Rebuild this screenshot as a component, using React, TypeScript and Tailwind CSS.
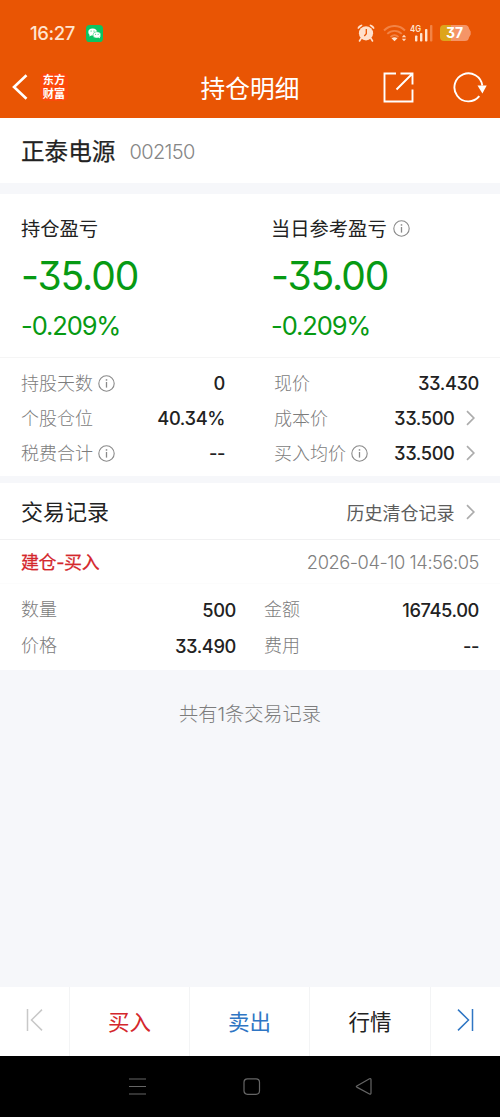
import type { ReactNode } from "react";

function InfoIcon() {
  return (
    <svg width="17" height="17" viewBox="0 0 17 17" fill="none" stroke="#8a8a8a" className="-mt-px block shrink-0">
      <circle cx="8.5" cy="8.5" r="7.7" strokeWidth="1.1" />
      <path d="M8.5 7v5.6" strokeWidth="1.3" />
      <path d="M8.5 4.2v1.5" strokeWidth="1.5" />
    </svg>
  );
}

function Chevron() {
  return (
    <svg width="9" height="16" viewBox="0 0 9 16" fill="none" stroke="#acacac" strokeWidth="1.7" className="-mt-px ml-[11.5px] mr-[4px] shrink-0">
      <path d="M1 1.2 7.8 8 1 14.8" />
    </svg>
  );
}

function StatusBar() {
  return (
    <div className="flex h-[66px] items-center pl-[30px] pr-[29px] text-[#ffe4cf]">
      <span className="w-[56px] pb-px text-[18.5px] font-medium leading-[20px] tracking-[-0.4px]">16:27</span>
      <svg width="17" height="17" viewBox="0 0 17 17">
        <rect width="17" height="17" rx="3.6" fill="#0bc462" />
        <ellipse cx="6.6" cy="7" rx="4.3" ry="3.6" fill="#fff" />
        <path d="m3.8 9.2-.5 2.3 2.4-1.3Z" fill="#fff" />
        <ellipse cx="10.9" cy="9.9" rx="3.9" ry="3.2" fill="#fff" stroke="#0bc462" strokeWidth=".5" />
        <path d="m12.6 12.2 1.2 1.4.1-2.2Z" fill="#fff" />
        <g fill="#0bc462">
          <circle cx="5.1" cy="6" r=".6" />
          <circle cx="8" cy="6" r=".6" />
          <circle cx="9.6" cy="9.2" r=".5" />
          <circle cx="12.1" cy="9.2" r=".5" />
        </g>
      </svg>
      <svg width="18" height="18" viewBox="0 0 18 18" className="-mt-px ml-auto mr-[2px]" fill="#ffe0cc">
        <circle cx="9" cy="9.3" r="7.1" />
        <path d="M.4 4.2C1.2 2 2.6.8 5 .4l.5 1L1.4 5Z M17.6 4.2C16.8 2 15.4.8 13 .4l-.5 1L16.6 5Z" />
        <path d="m4 14.5-1.5 2.5 M14 14.5l1.5 2.5" stroke="#ffe0cc" strokeWidth="1.6" strokeLinecap="round" />
        <path d="M9.3 5v4.7L7.3 12" fill="none" stroke="#e95504" strokeWidth="1.3" />
      </svg>
      <svg width="24" height="17" viewBox="0 0 24 17" className="ml-[6px]" fill="none">
        <path d="M1 5.5C7-.6 16-.6 22 5.5" stroke="#f28345" strokeWidth="1.9" />
        <path d="M4.3 8.9c4.2-4 10.2-4 14.4 0" stroke="#f28345" strokeWidth="1.9" />
        <path d="M7.5 12c2.5-2.3 5.5-2.3 8 0" stroke="#f28345" strokeWidth="1.7" />
        <path d="M8.5 13.3c2-1.5 4-1.5 6 0L11.5 16.2Z" fill="#ffe4cf" />
        <path d="m18.8 12.3 2.2-2.6 2.2 2.6Z M18.8 13.7l2.2 2.6 2.2-2.6Z" fill="#ffd9be" />
      </svg>
      <svg width="24" height="18" viewBox="0 0 24 18" className="ml-[3px]">
        <text x="0" y="7.6" fontSize="9.5" fontWeight="600" fill="#ffe4cf" textLength="11" lengthAdjust="spacingAndGlyphs">4G</text>
        <g fill="#ffe4cf">
          <rect x="5" y="11.5" width="2.4" height="6" rx=".8" />
          <rect x="10" y="9" width="2.4" height="8.5" rx=".8" />
          <rect x="15" y="5" width="2.4" height="12.5" rx=".8" />
          <rect x="20" y="1" width="2.4" height="16.5" rx=".8" fill="#f28345" />
        </g>
      </svg>
      <svg width="31" height="16" viewBox="0 0 31 16" className="ml-[6px]">
        <path d="M4 0H11V16H4Q0 16 0 12V4Q0 0 4 0Z" fill="#dda51c" />
        <path d="M11 0H25Q28.5 0 29 3.5L30.7 6.5V9.5L29 12.5Q28.5 16 25 16H11Z" fill="#f59567" />
        <text x="14.5" y="13.2" textAnchor="middle" fontSize="14" fontWeight="700" fill="#fff">37</text>
      </svg>
    </div>
  );
}

function NavBar() {
  return (
    <div className="grid h-[52px] grid-cols-3 items-start text-white">
      <div className="flex h-[42px] items-center pl-[12px]">
        <svg width="16" height="26" viewBox="0 0 16 26" fill="none" stroke="#fff" strokeWidth="2.6">
          <path d="M14.5 1.2 2 13l12.5 11.8" />
        </svg>
        <div className="ml-[12px] flex h-[28px] w-[28px] flex-col items-center justify-center rounded-[5px] bg-[#fb4a0b] pb-px font-['Noto_Sans_CJK_SC',sans-serif] text-[11.2px] font-bold leading-[13.5px]">
          <span>东方</span>
          <span>财富</span>
        </div>
      </div>
      <h1 className="pt-px text-center text-[24.7px] leading-[44px]">持仓明细</h1>
      <div className="flex h-[42px] items-center justify-end pr-[13px]">
        <svg width="31" height="31" viewBox="0 0 31 31" fill="none" stroke="#fff" strokeWidth="1.9">
          <path d="M13 1.5H1.5V29.5H29.5V17.5" />
          <path d="M17.5 1.5H29.5V12.5 M29 2 13.5 17.5" />
        </svg>
        <svg width="34" height="31" viewBox="0 0 34 31" fill="none" className="ml-[39px]">
          <path d="M26.3 24.2A14 14 0 1 1 29.3 13.5" stroke="#fff" strokeWidth="1.9" />
          <path d="M24.5 13.5h9.2l-4.3 8Z" fill="#fff" />
        </svg>
      </div>
    </div>
  );
}

function ProfitBlock({ label, info }: { label: string; info?: boolean }) {
  return (
    <div className="w-[250px] shrink-0 text-[#079a13]">
      <div className="flex h-[24px] items-center gap-[6px]">
        <span className="text-[19.3px] leading-[24px] text-[#222]">{label}</span>
        {info && <InfoIcon />}
      </div>
      <div className="mt-[10px] text-[39px] leading-[50px] tracking-[-1.1px]">-35.00</div>
      <div className="mt-[9px] text-[25.5px] leading-[32px] tracking-[-1.1px]">-0.209%</div>
    </div>
  );
}

type RowProps = { label: string; value: string; info?: boolean; link?: boolean; className?: string };

function Row({ label, value, info, link, className = "h-[35px]" }: RowProps) {
  return (
    <div className={`flex items-center ${className}`}>
      <span className="text-[18px] font-light leading-[24px] text-[#7c7c7c]">{label}</span>
      {info && <span className="ml-[5px]"><InfoIcon /></span>}
      <span className="ml-auto pb-px text-[18.3px] font-medium leading-[24px] tracking-[-0.4px] text-[#222]">{value}</span>
      {link && <Chevron />}
    </div>
  );
}

function Tab({ children, className }: { children: ReactNode; className: string }) {
  return <div className={`flex items-center justify-center border-r border-[#f3f4f5] ${className}`}>{children}</div>;
}

export default function App() {
  return (
    <div className="flex h-[1117px] w-[500px] flex-col overflow-hidden whitespace-nowrap bg-[#f6f7fa] font-['Inter','Noto_Sans_CJK_SC',sans-serif] [font-feature-settings:'cv09']">
      <header className="h-[118px] shrink-0 bg-[#e95504]">
        <StatusBar />
        <NavBar />
      </header>

      <section className="flex h-[65px] shrink-0 items-center bg-white pl-[21px] pt-[3px]">
        <span className="text-[23.6px] leading-[30px] text-[#222] [-webkit-text-stroke:0.25px_#222]">正泰电源</span>
        <span className="ml-[14px] text-[20px] font-light leading-[30px] tracking-[-0.6px] text-[#868686]">002150</span>
      </section>

      <section className="mt-[11px] h-[282px] shrink-0 bg-white">
        <div className="flex h-[163px] pl-[21px] pt-[23px]">
          <ProfitBlock label="持仓盈亏" />
          <ProfitBlock label="当日参考盈亏" info />
        </div>
        <div className="grid grid-cols-[204px_205px] gap-x-[49px] border-t border-[#f5f5f5] pl-[21px] pt-[8px]">
          <Row label="持股天数" value="0" info />
          <Row label="现价" value="33.430" />
          <Row label="个股仓位" value="40.34%" />
          <Row label="成本价" value="33.500" link />
          <Row label="税费合计" value="--" info />
          <Row label="买入均价" value="33.500" info link />
        </div>
      </section>

      <section className="mt-[7px] h-[187px] shrink-0 bg-white">
        <div className="flex h-[57px] items-center border-b border-[#f1f1f2] pl-[21px] pr-[21px] pt-[2px]">
          <h2 className="text-[22px] leading-[30px] text-[#222]">交易记录</h2>
          <span className="ml-auto pt-[3px] text-[18px] leading-[24px] text-[#5c5c5c]">历史清仓记录</span>
          <Chevron />
        </div>
        <div className="flex h-[44px] items-center justify-between border-b border-[#fcfcfc] px-[21px]">
          <span className="pt-[2px] text-[18px] leading-[24px] tracking-[-0.4px] text-[#d4272c] [-webkit-text-stroke:0.25px_#d4272c]">建仓-买入</span>
          <span className="text-[18.3px] font-light leading-[24px] tracking-[-0.45px] text-[#808080]">2026-04-10 14:56:05</span>
        </div>
        <div className="grid grid-cols-[215px_215px] gap-x-[28px] pl-[21px] pt-[8px]">
          <Row label="数量" value="500" className="h-[36px]" />
          <Row label="金额" value="16745.00" className="h-[36px]" />
          <Row label="价格" value="33.490" className="h-[36px]" />
          <Row label="费用" value="--" className="h-[36px]" />
        </div>
      </section>

      <p className="pt-[31px] text-center text-[19.2px] font-light leading-[26px] text-[#7c7c7c]">共有1条交易记录</p>

      <nav className="mt-auto grid h-[69px] shrink-0 grid-cols-[70px_120px_120px_121px_69px] bg-white text-[21.5px] leading-[30px]">
        <Tab className="pb-[3px] text-[#c8c8c8]">
          <svg width="17" height="22" viewBox="0 0 17 22" fill="none" stroke="currentColor" strokeWidth="1.5">
            <path d="M1.5 0v22M16 .6 5.5 11 16 21.4" />
          </svg>
        </Tab>
        <Tab className="pt-px text-[#d4272c]">买入</Tab>
        <Tab className="pt-px text-[#2f76c4]">卖出</Tab>
        <Tab className="pt-px text-[#222]">行情</Tab>
        <div className="flex items-center justify-center pb-[3px] text-[#2f76c4]">
          <svg width="17" height="22" viewBox="0 0 17 22" fill="none" stroke="currentColor" strokeWidth="1.5">
            <path d="M15.5 0v22M1 .6 11.5 11 1 21.4" />
          </svg>
        </div>
      </nav>

      <footer className="flex h-[61px] shrink-0 items-center bg-black pl-[129px]">
        <svg width="18" height="18" viewBox="0 0 18 18" fill="none" stroke="#666" strokeWidth="1.2">
          <path d="M0 1h17M0 8.5h17M0 16h17" />
        </svg>
        <svg width="18" height="18" viewBox="0 0 18 18" fill="none" stroke="#666" strokeWidth="1.2" className="ml-[96px]">
          <rect x="1" y=".8" width="15.5" height="15.5" rx="3.5" />
        </svg>
        <svg width="18" height="18" viewBox="0 0 18 18" fill="none" stroke="#666" strokeWidth="1.2" strokeLinejoin="round" className="ml-[94px]">
          <path d="M1.8 7.9 14.5.8Q16 .2 16 1.6V15.1Q16 16.6 14.5 16L1.8 9.1Q.8 8.5 1.8 7.9Z" />
        </svg>
      </footer>
    </div>
  );
}
